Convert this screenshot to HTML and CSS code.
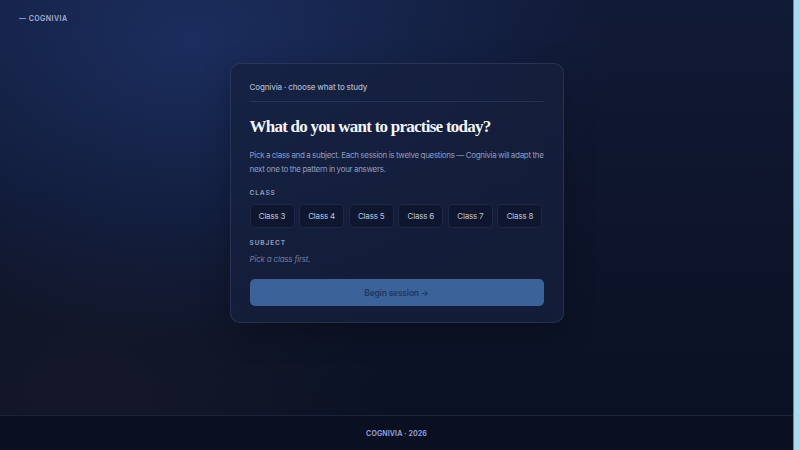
FILE: index.html
```html
<!DOCTYPE html>
<html lang="en">
<head>
<meta charset="utf-8">
<title>Cognivia</title>
<link rel="stylesheet" href="styles.css">
</head>
<body>
<div class="page">
  <header class="top">— COGNIVIA</header>
  <main class="main">
    <section class="card">
      <div class="eyebrow">Cognivia · choose what to study</div>
      <h1 class="title">What do you want to practise today?</h1>
      <p class="lead">Pick a class and a subject. Each session is twelve questions — Cognivia will adapt the next one to the pattern in your answers.</p>
      <div class="label">CLASS</div>
      <div class="chips">
        <button class="chip">Class 3</button>
        <button class="chip">Class 4</button>
        <button class="chip">Class 5</button>
        <button class="chip">Class 6</button>
        <button class="chip">Class 7</button>
        <button class="chip">Class 8</button>
      </div>
      <div class="label label-subject">SUBJECT</div>
      <div class="hint">Pick a class first.</div>
      <button class="begin" disabled>Begin session →</button>
    </section>
  </main>
  <footer class="foot">COGNIVIA · 2026</footer>
</div>
<div class="strip"></div>
</body>
</html>
```

FILE: styles.css
```css
html, body {
  margin: 0;
  padding: 0;
  width: 800px;
  height: 450px;
  overflow: hidden;
}
body {
  display: flex;
  font-family: "Inter", "Noto Sans", sans-serif;
  background: #0b1125;
}
.page {
  flex: 1;
  display: flex;
  flex-direction: column;
  background:
    radial-gradient(ellipse 420px 300px at 190px 40px, rgba(36, 62, 128, 0.55), rgba(36, 62, 128, 0) 100%),
    radial-gradient(ellipse 300px 200px at 90px 400px, rgba(44, 38, 52, 0.3), rgba(44, 38, 52, 0) 100%),
    linear-gradient(180deg, #111a36 0%, #0d1429 60%, #0b1124 100%);
}
.strip {
  width: 6px;
  background: #a7dbee;
  border-left: 1px solid #5f8fa5;
}
.top {
  height: 24px;
  box-sizing: border-box;
  padding: 14px 19px 0;
  font-size: 7px;
  line-height: 10px;
  font-weight: 600;
  letter-spacing: 0.45px;
  color: #a6b2d4;
}
.main {
  flex: 1;
  display: flex;
  justify-content: center;
  align-items: flex-start;
  padding-top: 39px;
}
.card {
  width: 334px;
  box-sizing: border-box;
  padding: 17px 19px 16px;
  border: 1px solid rgba(140, 160, 220, 0.16);
  border-radius: 10px;
  background: rgba(22, 32, 62, 0.75);
  box-shadow: 0 10px 30px rgba(0, 0, 0, 0.25);
}
.eyebrow {
  font-size: 8px;
  line-height: 12px;
  font-weight: 500;
  color: #a9b3cc;
  letter-spacing: -0.15px;
  padding-bottom: 8px;
  border-bottom: 1px solid rgba(150, 170, 220, 0.14);
}
.title {
  margin: 14px 0 0;
  font-family: "Liberation Serif", "DejaVu Serif", serif;
  font-weight: 700;
  font-size: 17px;
  line-height: 22px;
  color: #f4f5fa;
  letter-spacing: -0.75px;
}
.lead {
  margin: 10px 0 0;
  font-size: 8px;
  line-height: 14px;
  color: #8f9bc0;
  letter-spacing: -0.3px;
  word-spacing: -0.3px;
}
.label {
  margin-top: 13px;
  font-size: 6.5px;
  line-height: 9px;
  font-weight: 700;
  letter-spacing: 0.9px;
  color: #8c98ba;
}
.label-subject {
  margin-top: 11px;
}
.chips {
  display: flex;
  gap: 4.6px;
  margin-top: 5.5px;
}
.chip {
  height: 24px;
  width: 45px;
  padding: 0;
  box-sizing: border-box;
  border: 1px solid rgba(140, 160, 220, 0.12);
  border-radius: 5px;
  background: #0f1730;
  font-family: "Inter", "Noto Sans", sans-serif;
  font-size: 8px;
  letter-spacing: -0.2px;
  color: #bcc6df;
}
.hint {
  margin-top: 5.5px;
  font-size: 8px;
  line-height: 12px;
  font-style: italic;
  color: #6f7b9e;
  letter-spacing: -0.2px;
}
.begin {
  display: block;
  width: 100%;
  height: 27px;
  margin-top: 14px;
  border: none;
  border-radius: 5px;
  background: #3b6399;
  font-family: "Inter", "Noto Sans", sans-serif;
  font-size: 8.3px;
  font-weight: 600;
  color: #1f3660;
  letter-spacing: -0.1px;
}
.foot {
  height: 35px;
  box-sizing: border-box;
  border-top: 1px solid rgba(120, 140, 190, 0.16);
  background: #0a1022;
  display: flex;
  align-items: center;
  justify-content: center;
  font-size: 7px;
  font-weight: 700;
  letter-spacing: 0.1px;
  color: #8f9cd2;
}
```
